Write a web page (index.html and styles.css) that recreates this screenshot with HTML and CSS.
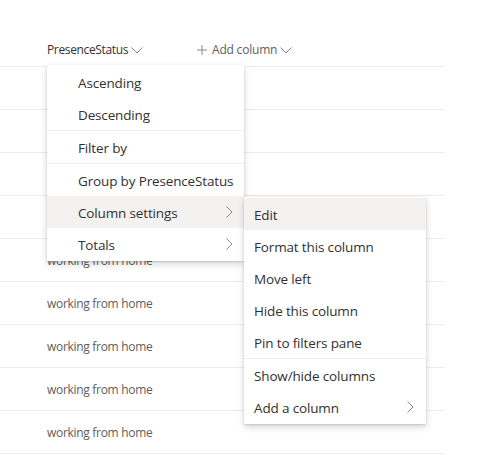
FILE: index.html
```html
<!DOCTYPE html>
<html>
<head>
<meta charset="utf-8">
<link rel="stylesheet" href="styles.css">
</head>
<body>
<div class="list">
  <div class="header">
    <div class="col-head status">PresenceStatus
      <svg class="down" width="12" height="7" viewBox="0 0 12 7"><path d="M0.5 0.5 L6 6 L11.5 0.5" fill="none" stroke="#8a8886" stroke-width="1"/></svg>
    </div>
    <div class="col-head add">
      <svg class="plus" width="10" height="10" viewBox="0 0 10 10"><path d="M5 0 V10 M0 5 H10" fill="none" stroke="#8a8886" stroke-width="1"/></svg>
      Add column
      <svg class="down" width="12" height="7" viewBox="0 0 12 7"><path d="M0.5 0.5 L6 6 L11.5 0.5" fill="none" stroke="#8a8886" stroke-width="1"/></svg>
    </div>
  </div>
  <div class="row"></div>
  <div class="row"></div>
  <div class="row"></div>
  <div class="row"></div>
  <div class="row"><span class="cell">working from home</span></div>
  <div class="row"><span class="cell">working from home</span></div>
  <div class="row"><span class="cell">working from home</span></div>
  <div class="row"><span class="cell">working from home</span></div>
  <div class="row"><span class="cell">working from home</span></div>
</div>

<div class="menu main-menu">
  <div class="item">Ascending</div>
  <div class="item">Descending</div>
  <div class="divider"></div>
  <div class="item">Filter by</div>
  <div class="divider"></div>
  <div class="item">Group by PresenceStatus</div>
  <div class="item active">Column settings
    <svg class="chev" width="7" height="12" viewBox="0 0 7 12"><path d="M0.5 0.5 L6 6 L0.5 11.5" fill="none" stroke="#8a8886" stroke-width="1"/></svg>
  </div>
  <div class="item">Totals
    <svg class="chev" width="7" height="12" viewBox="0 0 7 12"><path d="M0.5 0.5 L6 6 L0.5 11.5" fill="none" stroke="#8a8886" stroke-width="1"/></svg>
  </div>
</div>

<div class="menu sub-menu">
  <div class="item active">Edit</div>
  <div class="item">Format this column</div>
  <div class="item">Move left</div>
  <div class="item">Hide this column</div>
  <div class="item">Pin to filters pane</div>
  <div class="divider"></div>
  <div class="item">Show/hide columns</div>
  <div class="item">Add a column
    <svg class="chev" width="7" height="12" viewBox="0 0 7 12"><path d="M0.5 0.5 L6 6 L0.5 11.5" fill="none" stroke="#8a8886" stroke-width="1"/></svg>
  </div>
</div>
</body>
</html>
```
FILE: styles.css
```css
* { box-sizing: border-box; }
html, body {
  margin: 0;
  padding: 0;
  background: #ffffff;
  font-family: "Open Sans", "Noto Sans", "Liberation Sans", sans-serif;
  color: #323130;
}
body {
  width: 484px;
  height: 455px;
  overflow: hidden;
  position: relative;
}
.list {
  width: 444px;
  padding-top: 32px;
}
.header {
  height: 35px;
  border-bottom: 1px solid #edebe9;
  display: flex;
  align-items: center;
  padding-left: 47px;
  padding-top: 1px;
}
.col-head {
  font-size: 12px;
  color: #323130;
  display: flex;
  align-items: center;
  letter-spacing: -0.35px;
}
.col-head .down { margin-left: 3px; margin-top: 1px; }
.status { width: 150px; }
.add .plus { margin-right: 5px; }
.add { color: #605e5c; letter-spacing: -0.2px; }
.row {
  height: 43px;
  border-bottom: 1px solid #edebe9;
  display: flex;
  align-items: center;
  padding-left: 47px;
}
.cell {
  font-size: 12px;
  color: #605e5c;
  letter-spacing: -0.3px;
}
.menu {
  position: absolute;
  background: #ffffff;
  padding: 1px 0;
  box-shadow: 0 3.2px 7.2px rgba(0,0,0,0.16), 0 0.6px 1.8px rgba(0,0,0,0.13);
}
.main-menu {
  left: 47px;
  top: 65px;
  width: 197px;
}
.sub-menu {
  left: 244px;
  top: 197px;
  width: 182px;
}
.item {
  height: 32px;
  display: flex;
  align-items: center;
  padding-top: 2px;
  font-size: 13.5px;
  color: #323130;
  letter-spacing: -0.15px;
  position: relative;
}
.main-menu .item { padding-left: 31px; }
.sub-menu .item { padding-left: 10px; }
.item.active { background: #f3f2f1; }
.divider {
  height: 1px;
  background: #edebe9;
}
.chev {
  position: absolute;
  right: 11px;
  top: 10px;
}
.sub-menu .chev { right: 12px; }
```
